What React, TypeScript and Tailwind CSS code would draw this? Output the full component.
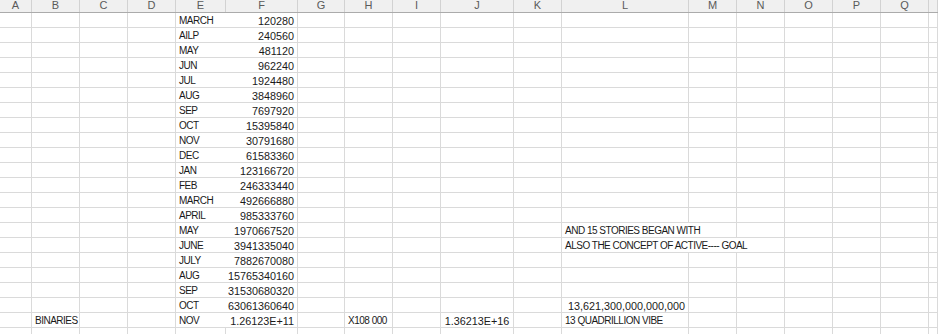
import * as React from "react"

type Col = { key: string; w: string; label?: boolean }

const cols: Col[] = [
    { key: "A", w: "w-[32px]" },
    { key: "B", w: "w-[48px]" },
    { key: "C", w: "w-[48px]" },
    { key: "D", w: "w-[48px]" },
    { key: "E", w: "w-[50px]" },
    { key: "F", w: "w-[72px]" },
    { key: "G", w: "w-[47px]" },
    { key: "H", w: "w-[48px]" },
    { key: "I", w: "w-[48px]" },
    { key: "J", w: "w-[73px]" },
    { key: "K", w: "w-[48px]" },
    { key: "L", w: "w-[127px]" },
    { key: "M", w: "w-[48px]" },
    { key: "N", w: "w-[48px]" },
    { key: "O", w: "w-[48px]" },
    { key: "P", w: "w-[48px]" },
    { key: "Q", w: "w-[48px]" },
    { key: "R", w: "flex-1", label: false },
]

type Cell = { text: string; align?: "left" | "right" | "center"; num?: boolean }
type Row = Record<string, Cell>

const months: [string, string][] = [
    ["MARCH", "120280"],
    ["AILP", "240560"],
    ["MAY", "481120"],
    ["JUN", "962240"],
    ["JUL", "1924480"],
    ["AUG", "3848960"],
    ["SEP", "7697920"],
    ["OCT", "15395840"],
    ["NOV", "30791680"],
    ["DEC", "61583360"],
    ["JAN", "123166720"],
    ["FEB", "246333440"],
    ["MARCH", "492666880"],
    ["APRIL", "985333760"],
    ["MAY", "1970667520"],
    ["JUNE", "3941335040"],
    ["JULY", "7882670080"],
    ["AUG", "15765340160"],
    ["SEP", "31530680320"],
    ["OCT", "63061360640"],
    ["NOV", "1.26123E+11"],
]

const rows: Row[] = months.map(([m, v]) => ({
    E: { text: m },
    F: { text: v, align: "right", num: true },
}))

rows[14].L = { text: "AND 15 STORIES BEGAN WITH" }
rows[15].L = { text: "ALSO THE CONCEPT OF ACTIVE---- GOAL" }
rows[19].L = { text: "13,621,300,000,000,000", align: "right", num: true }
rows[20].B = { text: "BINARIES" }
rows[20].H = { text: "X108 000" }
rows[20].J = { text: "1.36213E+16", align: "center", num: true }
rows[20].L = { text: "13 QUADRILLION VIBE" }
rows.push({})

// gridlines hidden where text spills over, or under filled cells
function hideRight(r: number, key: string) {
    if (key === "E" && r < 21) return true
    if (key === "L" && (r === 14 || r === 15)) return true
    if (key === "M" && r === 15) return true
    return false
}

function cellClass(cell: Cell) {
    const font = cell.num ? "text-[10.8px]" : "text-[10px] tracking-[-0.5px]"
    if (cell.align === "right") return `absolute right-[3px] top-[1px] ${font}`
    if (cell.align === "center") return `absolute left-0 right-0 top-[1px] text-center ${font}`
    return `absolute left-[3px] top-[1px] ${font}`
}

export default function App() {
    return (
        <div className="w-[938px] h-[334px] overflow-hidden bg-white font-['Liberation_Sans',Arial,sans-serif] text-[10px] text-[#1a1a1a]">
            <div className="flex h-[13px] bg-[#f0f0f0] border-b border-[#ababab]">
                {cols.map((c) => (
                    <div
                        key={c.key}
                        className={`${c.w} shrink-0 border-r border-[#d2d2d2] text-center text-[11px] leading-[11px] text-[#5a5a5a]`}
                    >
                        {c.label === false ? "" : c.key}
                    </div>
                ))}
            </div>
            {rows.map((row, r) => (
                <div key={r} className="flex h-[15px]">
                    {cols.map((c) => {
                        const cell = row[c.key]
                        return (
                            <div
                                key={c.key}
                                className={`${c.w} shrink-0 border-b border-[#dadada] leading-[14px] whitespace-nowrap relative ${hideRight(r, c.key) ? "" : "border-r"}`}
                            >
                                {cell && <span className={cellClass(cell)}>{cell.text}</span>}
                            </div>
                        )
                    })}
                </div>
            ))}
        </div>
    )
}
